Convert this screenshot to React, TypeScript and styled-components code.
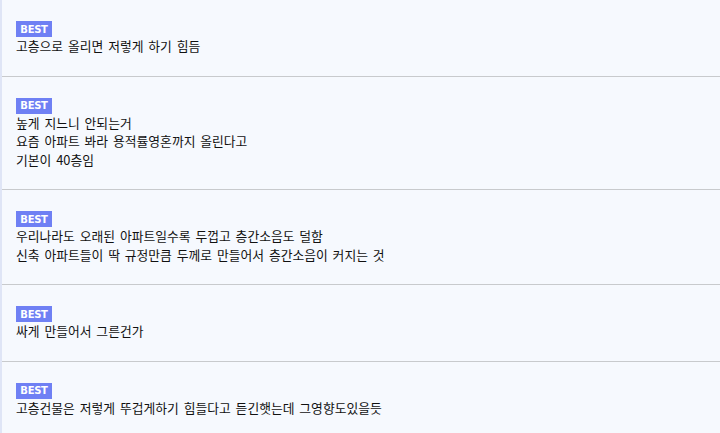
import React from "react";
import styled, { createGlobalStyle } from "styled-components";

const GlobalStyle = createGlobalStyle`
    html, body {
        margin: 0;
        padding: 0;
        background: #f6f9fe;
    }
    body {
        font-family: "Noto Sans CJK KR", "Noto Sans", sans-serif;
    }
`;

const comments: string[][] = [
    ["고층으로 올리면 저렇게 하기 힘듬"],
    ["높게 지느니 안되는거", "요즘 아파트 봐라 용적률영혼까지 올린다고", "기본이 40층임"],
    [
        "우리나라도 오래된 아파트일수록 두껍고 층간소음도 덜함",
        "신축 아파트들이 딱 규정만큼 두께로 만들어서 층간소음이 커지는 것",
    ],
    ["싸게 만들어서 그른건가"],
    ["고층건물은 저렇게 뚜겁게하기 힘들다고 듣긴햇는데 그영향도있을듯"],
];

const App = () => {
    return (
        <>
            <GlobalStyle />
            <List>
                {comments.map((lines, i) => (
                    <Item key={i}>
                        <Badge>BEST</Badge>
                        <Body>
                            {lines.map((line, j) => (
                                <Line key={j}>{line}</Line>
                            ))}
                        </Body>
                    </Item>
                ))}
            </List>
        </>
    );
};

const List = styled.ul`
    list-style: none;
    margin: 0;
    padding: 0;
    min-height: 433px;
    border-left: 2px solid #dfe5f6;
    background: #f6f9fe;
`;

const Item = styled.li`
    padding: 21px 14px 20px;
    border-bottom: 1px solid #c8cacd;
    &:last-child {
        border-bottom: none;
    }
`;

const Badge = styled.span`
    display: flex;
    align-items: center;
    justify-content: center;
    width: 36px;
    height: 16px;
    background: #6f80f4;
    color: #fff;
    font-family: "DejaVu Sans", sans-serif;
    font-size: 10px;
    font-weight: bold;
    letter-spacing: -0.3px;
`;

const Body = styled.div`
    color: #111;
    font-size: 12.8px;
    line-height: 18.5px;
    word-spacing: 2px;
`;

const Line = styled.p`
    margin: 0;
    white-space: nowrap;
`;

export default App;
